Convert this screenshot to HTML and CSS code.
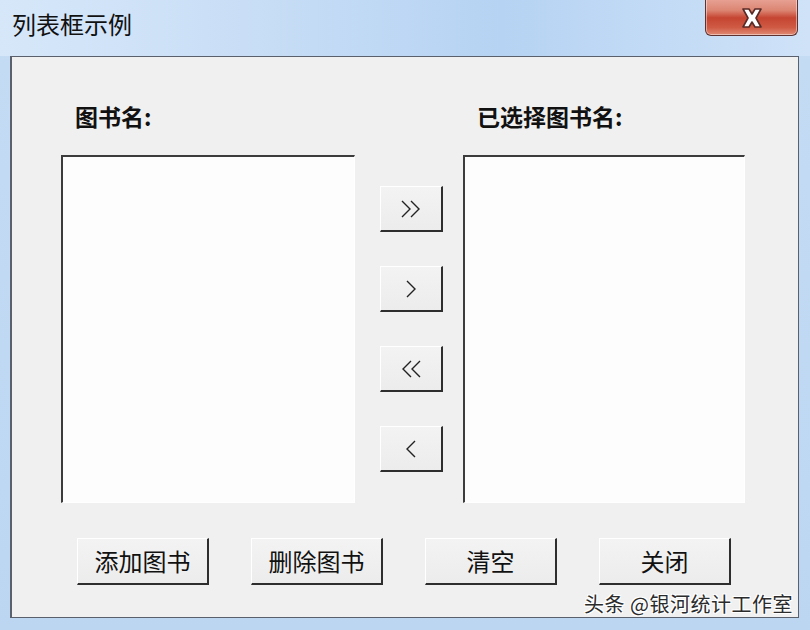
FILE: index.html
```html
<!DOCTYPE html>
<html lang="zh">
<head>
<meta charset="utf-8">
<title>列表框示例</title>
<link rel="stylesheet" href="styles.css">
</head>
<body>
<div class="window">
  <div class="titlebar">
    <span class="title">列表框示例</span>
    <div class="close">
      <svg width="30" height="22" viewBox="0 0 30 22">
        <path d="M6 2 L12 2 L15 7 L18 2 L24 2 L19 11 L24 20 L18 20 L15 15 L12 20 L6 20 L11 11 Z" fill="#fff" stroke="#5a2a26" stroke-width="1.6" stroke-linejoin="round"/>
      </svg>
    </div>
  </div>
  <div class="client">
    <div class="panel">
      <div class="col col-left">
        <div class="label">图书名:</div>
        <div class="listbox lb-left"></div>
      </div>
      <div class="col col-mid">
        <button class="btn arrow"><svg width="24" height="20" viewBox="0 0 24 20"><polyline points="3,2 11,10 3,18" fill="none" stroke="#222" stroke-width="1.4"/><polyline points="12,2 20,10 12,18" fill="none" stroke="#222" stroke-width="1.4"/></svg></button>
        <button class="btn arrow"><svg width="24" height="20" viewBox="0 0 24 20"><polyline points="8,2 16,10 8,18" fill="none" stroke="#222" stroke-width="1.4"/></svg></button>
        <button class="btn arrow"><svg width="24" height="20" viewBox="0 0 24 20"><polyline points="12,2 4,10 12,18" fill="none" stroke="#222" stroke-width="1.4"/><polyline points="21,2 13,10 21,18" fill="none" stroke="#222" stroke-width="1.4"/></svg></button>
        <button class="btn arrow"><svg width="24" height="20" viewBox="0 0 24 20"><polyline points="16,2 8,10 16,18" fill="none" stroke="#222" stroke-width="1.4"/></svg></button>
      </div>
      <div class="col col-right">
        <div class="label">已选择图书名:</div>
        <div class="listbox lb-right"></div>
      </div>
    </div>
    <div class="actions">
      <button class="btn action">添加图书</button>
      <button class="btn action">删除图书</button>
      <button class="btn action">清空</button>
      <button class="btn action">关闭</button>
    </div>
    <div class="watermark">头条 @银河统计工作室</div>
  </div>
</div>
</body>
</html>
```

FILE: styles.css
```css
html, body {
  margin: 0;
  padding: 0;
}
body {
  width: 810px;
  height: 630px;
  overflow: hidden;
  font-family: "Noto Sans CJK SC", "Noto Sans", sans-serif;
}
.window {
  width: 810px;
  height: 630px;
  background: linear-gradient(to bottom, #d3e5f8 0px, #c4dbf4 60px, #bcd6f2 630px);
  display: flex;
  flex-direction: column;
  box-sizing: border-box;
}
.titlebar {
  height: 56px;
  flex: none;
  display: flex;
  align-items: flex-start;
  justify-content: space-between;
  background: linear-gradient(to right, #d6e7f9 0%, #c9def6 30%, #b6d3f3 62%, #cfe2f8 100%);
}
.title {
  margin: 7px 0 0 12px;
  font-size: 24px;
  line-height: 34px;
  color: #111;
}
.close {
  margin: -3px 12px 0 0;
  width: 93px;
  height: 39px;
  box-sizing: border-box;
  border: 1px solid #5e3230;
  border-top: none;
  border-radius: 0 0 6px 6px;
  background: linear-gradient(to bottom, #e9a89b 0%, #dc8573 35%, #c54531 55%, #cf5a44 80%, #e08a74 100%);
  box-shadow: inset 0 0 0 1px rgba(255,255,255,0.45);
  display: flex;
  align-items: center;
  justify-content: center;
  padding-top: 3px;
}
.client {
  position: relative;
  margin: 0 11px 12px 10px;
  flex: 1;
  background: #f0f0f0;
  border: 1px solid #5a616d;
  border-left-width: 2px;
  box-sizing: border-box;
}
.panel {
  display: flex;
  padding: 44px 0 0 49px;
}
.col {
  display: flex;
  flex-direction: column;
}
.col-left { width: 294px; }
.col-right { width: 282px; }
.col-mid {
  width: 63px;
  margin: 0 20px 0 25px;
  padding-top: 85px;
  gap: 34px;
}
.label {
  margin-left: 14px;
  height: 30px;
  font-size: 23px;
  line-height: 30px;
  font-weight: 700;
  color: #111;
  margin-bottom: 24px;
}
.listbox {
  height: 348px;
  box-sizing: border-box;
  background: #fdfdfe;
  border-top: 2px solid #3c3c3c;
  border-left: 2px solid #3c3c3c;
  border-right: 1px solid #ffffff;
  border-bottom: 1px solid #ffffff;
}
.btn {
  box-sizing: border-box;
  background: linear-gradient(to bottom, #f3f3f3, #ececec);
  border-top: 1px solid #ffffff;
  border-left: 1px solid #ffffff;
  border-right: 2px solid #2e2e2e;
  border-bottom: 2px solid #2e2e2e;
  padding: 0;
  margin: 0;
  font-family: "Noto Sans CJK SC", "Noto Sans", sans-serif;
  color: #111;
  display: flex;
  align-items: center;
  justify-content: center;
}
.arrow {
  width: 63px;
  height: 46px;
}
.actions {
  display: flex;
  padding: 35px 0 0 65px;
  gap: 42px;
}
.action {
  width: 132px;
  height: 47px;
  font-size: 24px;
  line-height: 30px;
}
.watermark {
  position: absolute;
  right: 5px;
  bottom: 1px;
  font-size: 20px;
  line-height: 24px;
  color: #2b2b2b;
  text-shadow: 1px 1px 0 #fff, -1px -1px 0 #fff, 1px -1px 0 #fff, -1px 1px 0 #fff;
  letter-spacing: 0.5px;
}
```
